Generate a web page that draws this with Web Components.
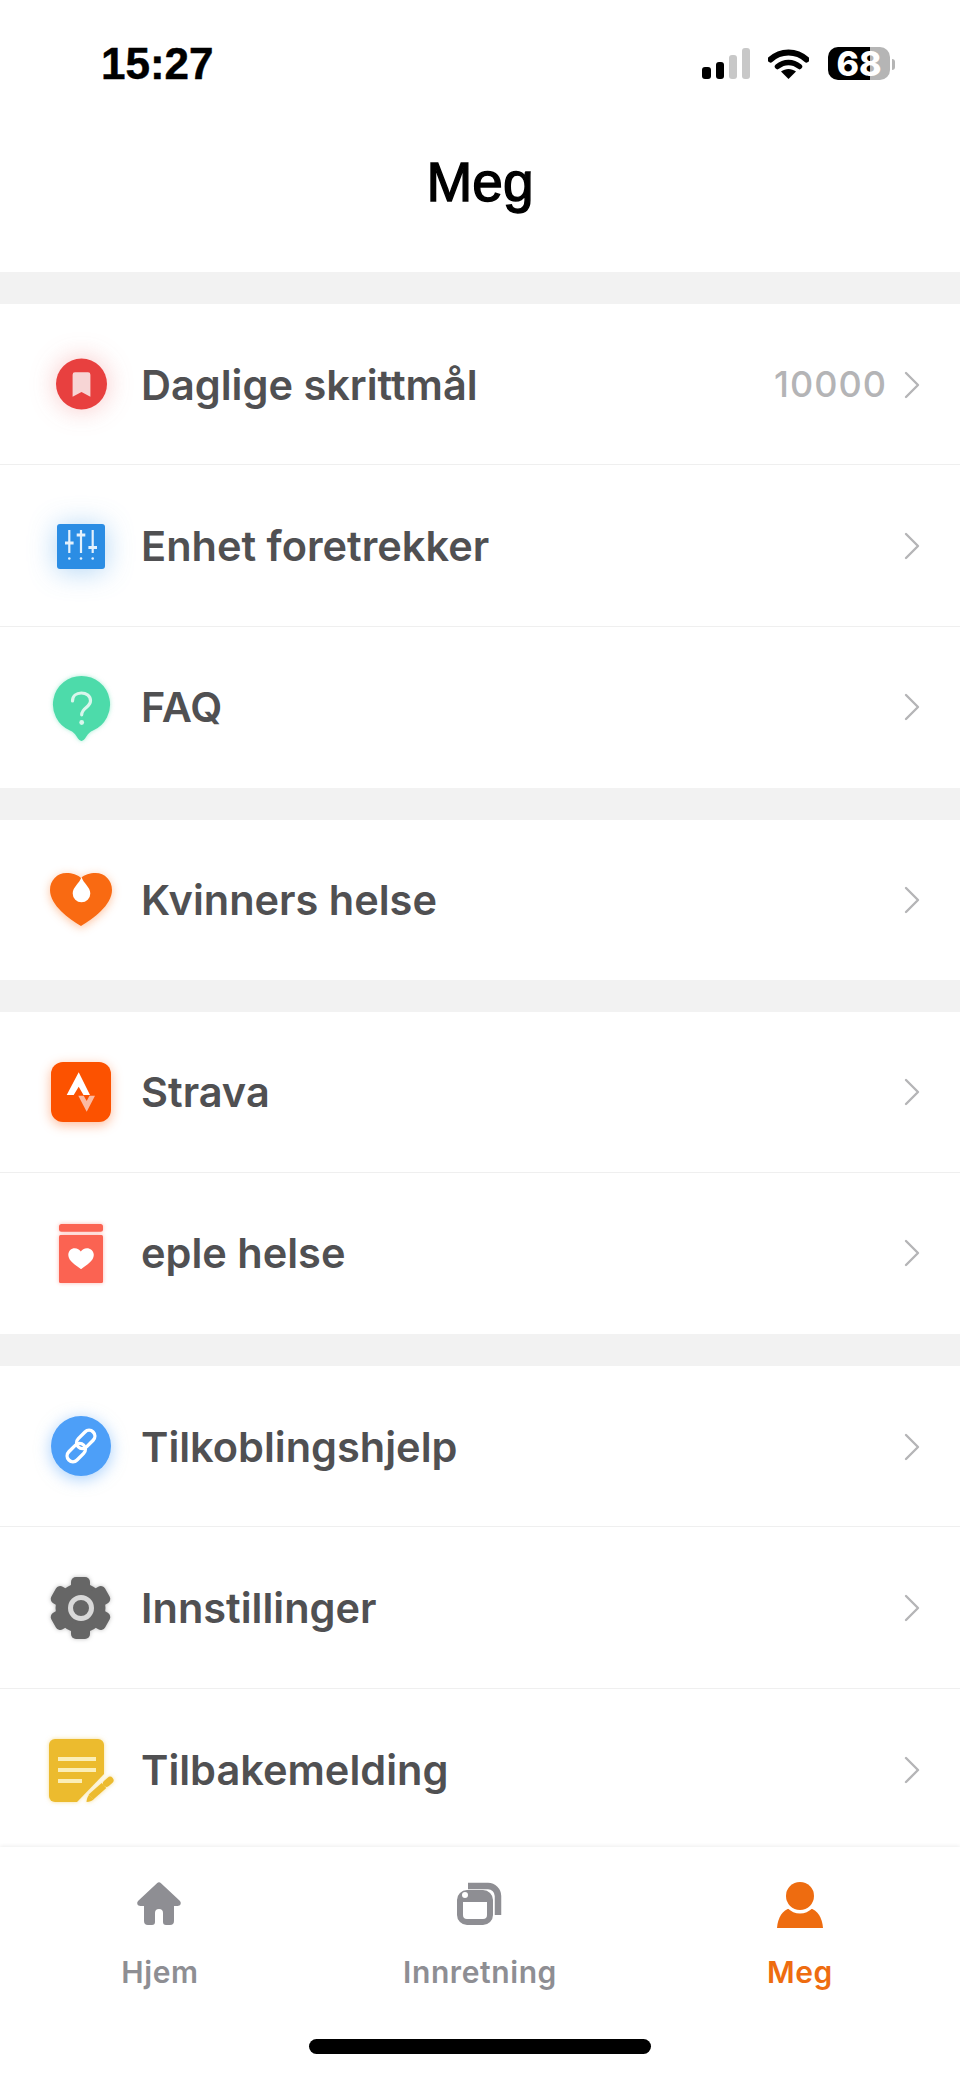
<!DOCTYPE html>
<html lang="no">
<head>
<meta charset="utf-8">
<title>Meg</title>
<style>
  html, body { margin: 0; padding: 0; background: #fff; }
  body { width: 960px; height: 2079px; overflow: hidden; font-family: Inter, "Liberation Sans", sans-serif; }
</style>
</head>
<body>
<app-screen>
  <status-bar time="15:27" battery="68"></status-bar>
  <page-title>Meg</page-title>
  <menu-group row-height="161.34">
    <menu-row icon="step" value="10000">Daglige skrittmål</menu-row>
    <menu-row icon="sliders">Enhet foretrekker</menu-row>
    <menu-row icon="faq" last>FAQ</menu-row>
  </menu-group>
  <menu-group row-height="160">
    <menu-row icon="heart" last>Kvinners helse</menu-row>
  </menu-group>
  <menu-group>
    <menu-row icon="strava">Strava</menu-row>
    <menu-row icon="apple" last>eple helse</menu-row>
  </menu-group>
  <menu-group row-height="161.5">
    <menu-row icon="link">Tilkoblingshjelp</menu-row>
    <menu-row icon="gear">Innstillinger</menu-row>
    <menu-row icon="note" last>Tilbakemelding</menu-row>
  </menu-group>
  <tab-bar slot="tabs">
    <tab-item icon="home">Hjem</tab-item>
    <tab-item icon="device">Innretning</tab-item>
    <tab-item icon="me" active>Meg</tab-item>
  </tab-bar>
</app-screen>

<script>
// row icons, drawn in a 64x64 box centred on the row
const ROW_ICONS = {
  step: {
    glow: "drop-shadow(0 0 13px rgba(232,64,63,.3))",
    svg: `<circle cx="32.5" cy="32" r="25.5" fill="#e8403f"/>
      <path d="M26 20.3h13a2.4 2.4 0 0 1 2.4 2.4v22l-8.9-4.6-8.9 4.6v-22a2.4 2.4 0 0 1 2.4-2.4z" fill="#f7d5d5"/>`
  },
  sliders: {
    glow: "drop-shadow(0 2px 14px rgba(43,141,228,.38))",
    svg: `<rect x="8" y="11" width="48" height="45" rx="3" fill="#2b8de4"/>
      <g stroke="#e4f1fc" stroke-width="2.2" fill="none">
        <path d="M20.3 17v23M32 17v23M43.7 17v23"/>
        <path d="M16 30h8.6M27.700 22h8.600M39.400 34.500h8.600" stroke-width="3"/>
      </g>
      <g fill="#e4f1fc"><circle cx="20.300" cy="45.500" r="1.300"/><circle cx="32" cy="45.500" r="1.300"/><circle cx="43.700" cy="45.500" r="1.300"/></g>`
  },
  faq: {
    glow: "drop-shadow(0 0 2px rgba(77,219,170,.5))",
    svg: `<path d="M32.500 1a28.500 28.500 0 0 1 11.500 54.600c-3 1.300-5 3-7 6.500-1.200 2-3 3.900-4.500 3.900s-3.300-1.900-4.500-3.900c-2-3.500-4-5.200-7-6.500A28.500 28.500 0 0 1 32.500 1z" fill="#4ddbaa"/>
      <path d="M23.500 26c0-5 3.800-8 8.800-8s9.200 3 9.200 7.800c0 6.700-8.800 6.600-8.800 14" fill="none" stroke="#d9f6ec" stroke-width="3.200" stroke-linecap="round"/>
      <circle cx="32.700" cy="47.500" r="2.400" fill="#d9f6ec"/>`
  },
  heart: {
    glow: "drop-shadow(0 2px 5px rgba(249,106,18,.4))",
    svg: `<path d="M32 11C28.500 7.500 23 6 17.500 6 8 6 1 13.500 1 23c0 15 19 29 31 36 12-7 31-21 31-36 0-9.500-7-17-16.500-17C41 6 35.500 7.500 32 11z" fill="#f96a12"/>
      <path d="M32.500 10c-2 6.500-8.800 10-8.800 16.500a8.800 8.800 0 0 0 17.600 0C41.300 20 34.500 16.500 32.500 10z" fill="#fff"/>`
  },
  strava: {
    glow: "drop-shadow(0 3px 6px rgba(252,82,0,.4))",
    svg: `<rect x="2" y="2" width="60" height="60" rx="12" fill="#fc5200"/>
      <path d="M29.700 12.300 41 35h-6.500l-4.800-8.300L24.700 35h-7z" fill="#fff"/>
      <path d="M29.300 35.700h5.400l3 5.400 2.800-5.400H46l-8.300 16z" fill="#fbb9a0"/>`
  },
  apple: {
    glow: "drop-shadow(0 0 2px rgba(251,99,82,.45))",
    svg: `<rect x="10" y="3" width="44" height="7.700" rx="2.500" fill="#fb6352"/>
      <rect x="10" y="14" width="44" height="48" rx="1.500" fill="#fb6352"/>
      <path d="M31.800 48c-5-3.600-12.500-8.200-12.500-14 0-4 3-6.700 6.400-6.700 2.700 0 4.800 1.300 6.100 3.200 1.300-1.900 3.400-3.200 6.100-3.200 3.400 0 6.900 2.700 6.900 6.700 0 5.800-7.500 10.400-12.500 14z" fill="#fff"/>`
  },
  link: {
    glow: "drop-shadow(0 3px 8px rgba(77,159,248,.5))",
    svg: `<circle cx="32" cy="32" r="30" fill="#4d9ff8"/>
      <g fill="none" stroke="#fff" stroke-width="3.400" transform="rotate(-45 32 32)">
        <rect x="13.500" y="27.500" width="21" height="11.600" rx="5.800"/>
        <rect x="29.500" y="24.900" width="21" height="11.600" rx="5.800"/>
      </g>`
  },
  gear: {
    glow: "drop-shadow(0 0 2px rgba(0,0,0,.25))",
    svg: `<g fill="#666">
        <circle cx="31.500" cy="32" r="25"/>
        <rect x="22" y="1" width="19" height="62" rx="5"/>
        <rect x="22" y="1" width="19" height="62" rx="5" transform="rotate(60 31.500 32)"/>
        <rect x="22" y="1" width="19" height="62" rx="5" transform="rotate(120 31.500 32)"/>
      </g>
      <circle cx="32" cy="32" r="10.500" fill="#666" stroke="#d9d9d9" stroke-width="5"/>`
  },
  note: {
    glow: "drop-shadow(0 0 2px rgba(236,187,46,.5))",
    svg: `<path d="M6 2h43a6 6 0 0 1 6 6v29L28 65H6a6 6 0 0 1-6-6V8a6 6 0 0 1 6-6z" fill="#ecbb2e"/>
      <g fill="#fbeeb7">
        <rect x="9" y="20" width="38" height="4"/>
        <rect x="9" y="31" width="38" height="4"/>
        <rect x="9" y="42" width="24" height="4"/>
      </g>
      <path d="M42 60l13-11.500" stroke="#ecbb2e" stroke-width="7" fill="none"/>
      <path d="M37.500 65c.3-3 1-5 2.500-7.200l4.500 4.700c-1.800 1.500-4 2.300-7 2.500z" fill="#ecbb2e"/>
      <path d="M57.500 46.300l3.500-3" stroke="#ecbb2e" stroke-width="7" stroke-linecap="round" fill="none"/>`
  }
}

const TAB_ICONS = {
  home: `<path d="M20 1.200a3 3 0 0 1 4 0l18.500 17.300c2.500 2.400 1 5.500-2 5.500H37v15a4 4 0 0 1-4 4h-4a3 3 0 0 1-3-3V31a4 4 0 0 0-8 0v9a3 3 0 0 1-3 3h-4a4 4 0 0 1-4-4V24H3.500c-3 0-4.500-3.100-2-5.500z" fill="currentColor"/>`,
  device: `<path d="M11 4h20a10 10 0 0 1 10 10v19" fill="none" stroke="currentColor" stroke-width="6.500"/>
    <rect x="3" y="11" width="30" height="29" rx="7" fill="none" stroke="currentColor" stroke-width="6"/>
    <path d="M3 20V16a6 6 0 0 1 6-6h18a6 6 0 0 1 6 6v4z" fill="currentColor"/>
    <circle cx="8" cy="13" r="3" fill="#fff"/>`,
  me: `<path d="M0 46C1 35 5 29 13 26h20c8 3 12 9 13 20z" fill="currentColor"/>
    <circle cx="23" cy="14" r="17.500" fill="#fff"/>
    <circle cx="23" cy="14" r="14" fill="currentColor"/>`
}

class AppScreen extends HTMLElement {
  constructor() {
    super()
    this.attachShadow({ mode: "open" })
  }

  connectedCallback() {
    this.shadowRoot.innerHTML = `
      <style>
        :host {
          display: flex;
          flex-direction: column;
          width: 960px;
          height: 2079px;
          background: #fff;
          overflow: hidden;
        }
        .content {
          flex: 1;
          min-height: 0;
          overflow: hidden;
        }
      </style>
      <div class="content"><slot></slot></div>
      <slot name="tabs"></slot>
    `
  }
}

class StatusBar extends HTMLElement {
  constructor() {
    super()
    this.attachShadow({ mode: "open" })
  }

  connectedCallback() {
    const time = this.getAttribute("time") || ""
    const battery = this.getAttribute("battery") || "0"
    this.shadowRoot.innerHTML = `
      <style>
        :host {
          display: flex;
          align-items: flex-start;
          justify-content: space-between;
          height: 100px;
          box-sizing: border-box;
          padding: 46px 65px 0 101px;
          font-family: "Liberation Sans", sans-serif;
        }
        .time {
          font-size: 44px;
          font-weight: 700;
          line-height: 36px;
          color: #000;
          -webkit-text-stroke: .5px #000;
        }
        .icons {
          display: flex;
          align-items: flex-start;
          margin-top: 1px;
        }
        .signal { margin-top: 1px; margin-right: 18px; }
        .wifi { margin-top: 1px; margin-right: 19px; }
        .battery {
          width: 62px;
          height: 33px;
          border-radius: 10px;
          background: linear-gradient(90deg, #000 0 42px, #b5b5b5 42px);
          color: #fff;
          font-family: Inter, "Liberation Sans", sans-serif;
          font-size: 34px;
          font-weight: 800;
          line-height: 33px;
          text-align: center;
        }
        .nub {
          width: 3px;
          height: 11px;
          margin: 12px 0 0 2px;
          border-radius: 0 3px 3px 0;
          background: #b5b5b5;
        }
      </style>
      <span class="time">${time}</span>
      <span class="icons">
        <svg class="signal" width="48" height="31" viewBox="0 0 48 31">
          <rect x="0" y="19" width="9" height="12" rx="3" fill="#000"/>
          <rect x="14" y="14" width="8" height="17" rx="3" fill="#000"/>
          <rect x="27" y="7" width="8" height="24" rx="3" fill="#c8c8c8"/>
          <rect x="40" y="0" width="8" height="31" rx="3" fill="#c8c8c8"/>
        </svg>
        <svg class="wifi" width="41" height="31" viewBox="0 0 41 31">
          <path d="M2.500 11.500C12.500 2 28.500 2 38.500 11.500" fill="none" stroke="#000" stroke-width="6" stroke-linecap="round"/>
          <path d="M9.500 18.500c6.500-5.500 15.500-5.500 22 0" fill="none" stroke="#000" stroke-width="5.500" stroke-linecap="round"/>
          <path d="M13 23.500c4.500-3.500 10.500-3.500 15 0L20.500 31z" fill="#000"/>
        </svg>
        <span class="battery">${battery}</span>
        <span class="nub"></span>
      </span>
    `
  }
}

class PageTitle extends HTMLElement {
  constructor() {
    super()
    this.attachShadow({ mode: "open" })
  }

  connectedCallback() {
    this.shadowRoot.innerHTML = `
      <style>
        :host {
          display: block;
          height: 172px;
          box-sizing: border-box;
          padding-top: 52px;
          text-align: center;
          font-family: "Liberation Sans", sans-serif;
          font-size: 55px;
          line-height: 60px;
          color: #000;
          -webkit-text-stroke: 1.4px #000;
        }
      </style>
      <slot></slot>
    `
  }
}

class MenuGroup extends HTMLElement {
  constructor() {
    super()
    this.attachShadow({ mode: "open" })
  }

  connectedCallback() {
    const rowHeight = this.getAttribute("row-height") || "161"
    this.shadowRoot.innerHTML = `
      <style>
        :host {
          display: block;
          border-top: 32px solid #f2f2f2;
          --row-height: ${rowHeight}px;
        }
      </style>
      <slot></slot>
    `
  }
}

class RowIcon extends HTMLElement {
  constructor() {
    super()
    this.attachShadow({ mode: "open" })
  }

  connectedCallback() {
    const icon = ROW_ICONS[this.getAttribute("name")]
    this.shadowRoot.innerHTML = `
      <style>
        :host {
          display: block;
          width: 64px;
          height: 64px;
          flex: none;
        }
        svg {
          display: block;
          overflow: visible;
          filter: ${icon.glow};
        }
      </style>
      <svg width="64" height="64" viewBox="0 0 64 64">${icon.svg}</svg>
    `
  }
}

class MenuRow extends HTMLElement {
  constructor() {
    super()
    this.attachShadow({ mode: "open" })
  }

  connectedCallback() {
    const icon = this.getAttribute("icon")
    const value = this.getAttribute("value")
    this.shadowRoot.innerHTML = `
      <style>
        :host {
          display: flex;
          align-items: center;
          height: var(--row-height, 161px);
          box-sizing: border-box;
          padding: 0 40px 0 49px;
          border-bottom: 1px solid ${this.hasAttribute("last") ? "transparent" : "#efefef"};
        }
        .label {
          flex: 1;
          margin-left: 28px;
          padding-top: 1px;
          font-size: 41.5px;
          font-weight: 600;
          color: #505052;
        }
        .value {
          margin-right: 17px;
          font-size: 36px;
          font-weight: 500;
          letter-spacing: 1px;
          color: #b4b4b6;
        }
        svg { flex: none; display: block; margin-top: 1px; }
      </style>
      <row-icon name="${icon}"></row-icon>
      <span class="label"><slot></slot></span>
      ${value ? `<span class="value">${value}</span>` : ""}
      <svg width="16" height="28" viewBox="0 0 16 28">
        <path d="M2 2l12 12L2 26" fill="none" stroke="#b5b5b7" stroke-width="2.400" stroke-linecap="round" stroke-linejoin="round"/>
      </svg>
    `
  }
}

class TabBar extends HTMLElement {
  constructor() {
    super()
    this.attachShadow({ mode: "open" })
  }

  connectedCallback() {
    this.shadowRoot.innerHTML = `
      <style>
        :host {
          display: block;
          position: relative;
          height: 232px;
          box-sizing: border-box;
          background: #fff;
          box-shadow: 0 -1px 4px rgba(0,0,0,.07);
        }
        .tabs {
          display: grid;
          grid-template-columns: repeat(3, 1fr);
        }
        .indicator {
          width: 342px;
          height: 15px;
          margin: 47px auto 0;
          border-radius: 8px;
          background: #000;
        }
      </style>
      <div class="tabs"><slot></slot></div>
      <div class="indicator"></div>
    `
  }
}

class TabItem extends HTMLElement {
  constructor() {
    super()
    this.attachShadow({ mode: "open" })
  }

  connectedCallback() {
    const color = this.hasAttribute("active") ? "#ee6c10" : "#8e8e93"
    this.shadowRoot.innerHTML = `
      <style>
        :host {
          display: flex;
          flex-direction: column;
          align-items: center;
          padding-top: 35px;
          color: ${color};
        }
        svg { display: block; overflow: visible; }
        .label {
          margin-top: 24px;
          font-size: 30px;
          font-weight: 600;
          line-height: 40px;
          letter-spacing: .6px;
        }
      </style>
      <svg width="46" height="46" viewBox="0 0 46 46">${TAB_ICONS[this.getAttribute("icon")]}</svg>
      <span class="label"><slot></slot></span>
    `
  }
}

customElements.define("app-screen", AppScreen)
customElements.define("status-bar", StatusBar)
customElements.define("page-title", PageTitle)
customElements.define("menu-group", MenuGroup)
customElements.define("row-icon", RowIcon)
customElements.define("menu-row", MenuRow)
customElements.define("tab-bar", TabBar)
customElements.define("tab-item", TabItem)
</script>
</body>
</html>
